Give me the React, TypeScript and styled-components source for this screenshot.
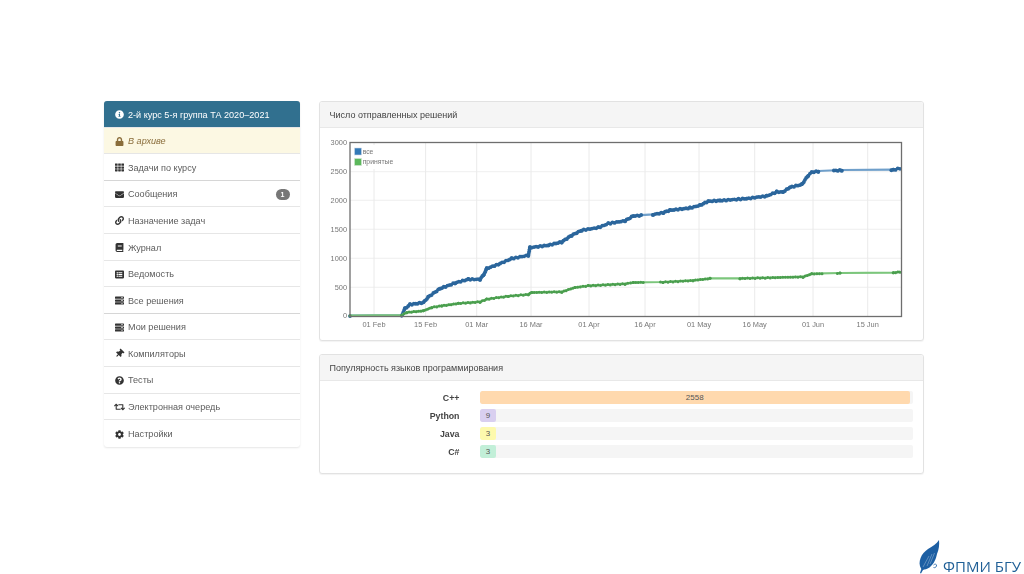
import React from "react";
import styled, { createGlobalStyle } from "styled-components";
import {
  FaInfoCircle, FaLock, FaTh, FaEnvelope, FaLink, FaBook, FaListAlt, FaServer,
  FaThumbtack, FaQuestionCircle, FaRetweet, FaCog,
} from "react-icons/fa";

const Global = createGlobalStyle`
  html, body { margin: 0; padding: 0; background: #fff; }
  body { font-family: "Liberation Sans", Arial, sans-serif; font-size: 9.1px; color: #333; overflow: hidden; }
`;

const Page = styled.div`
  width: 1024px; height: 574px; display: flex; flex-direction: column; box-sizing: border-box; padding-top: 101px;
  filter: blur(0.3px);
`;
const Main = styled.main`
  display: flex; align-items: flex-start; padding: 0 100px 0 104px; gap: 19px;
`;
const Sidebar = styled.nav`
  width: 196px; flex: none; border-radius: 3px; overflow: hidden; background: #fff;
  box-shadow: inset 0 0 0 0.5px #ddd, 0 1px 2px rgba(0,0,0,.1);
`;
const Row = styled.div<{ $kind?: "head" | "warn"; $heavy?: boolean }>`
  height: 26.6px; box-sizing: border-box; display: flex; align-items: center; gap: 4.5px; padding: 1.5px 10.5px 0;
  background: ${p => (p.$kind === "head" ? "#31708f" : p.$kind === "warn" ? "#fcf8e3" : "#fff")};
  color: ${p => (p.$kind === "head" ? "#fff" : p.$kind === "warn" ? "#8a6d3b" : "#5c5c5c")};
  font-style: ${p => (p.$kind === "warn" ? "italic" : "normal")};
  border-bottom: ${p => (p.$heavy ? "1.5px solid #d6d6d6" : "1px solid #e6e6e6")};
  &:last-child { border-bottom: 0; }
  svg { flex: none; width: 9px; height: 9px; color: ${p => (p.$kind === "head" ? "#fff" : p.$kind === "warn" ? "#8a6d3b" : "#333")}; }
`;
const Pin = styled(FaThumbtack)`
  transform: rotate(45deg);
`;
const Retweet = styled(FaRetweet)`
  && { width: 11px; height: 10px; margin: 0 -1px 0 -1px; }
`;
const Badge = styled.span`
  margin-left: auto; margin-right: 0; width: 14px; height: 11px; border-radius: 6px; background: #777; color: #fff;
  font-size: 7px; font-weight: bold; display: flex; align-items: center; justify-content: center;
`;
const Content = styled.div`
  width: 605px; flex: none; display: flex; flex-direction: column; gap: 13px;
`;
const Panel = styled.section`
  border: 1px solid #e2e2e2; border-radius: 3px; background: #fff; box-shadow: 0 1px 1px rgba(0,0,0,.05); overflow: hidden;
`;
const PanelHead = styled.h3`
  margin: 0; height: 26px; box-sizing: border-box; padding: 1px 10px 0 9.5px; display: flex; align-items: center;
  background: #f5f5f5; border-bottom: 1px solid #e8e8e8; font-size: 9px; font-weight: normal; color: #444;
`;
const ChartSvg = styled.svg`
  display: block; width: 603px; height: 212px;
`;
const Bars = styled.div`
  display: grid; grid-template-columns: 130px 1fr; column-gap: 20px; row-gap: 5px; padding: 10px 10px 15px;
  grid-auto-rows: 13px; align-items: center;
`;
const BarLabel = styled.div`
  text-align: right; font-weight: bold; color: #444; font-size: 8.8px; padding-right: 0.5px;
`;
const Track = styled.div`
  height: 100%; background: #f5f5f5; border-radius: 2px; overflow: hidden;
`;
const Fill = styled.div<{ $color: string }>`
  height: 100%; background: ${p => p.$color}; border-radius: 2px; color: #555; font-size: 8px;
  display: flex; align-items: center; justify-content: center;
`;
const Footer = styled.footer`
  margin-top: auto; display: flex; justify-content: flex-end; align-items: flex-end; gap: 0; padding-right: 3px; height: 35px;
`;
const LogoText = styled.span`
  font-family: "Open Sans", "Noto Sans", sans-serif; font-size: 15px; line-height: 16px; color: #1f5f96; white-space: nowrap;
`;

const items: { icon: React.ReactNode; text: string; kind?: "head" | "warn"; heavy?: boolean; badge?: string }[] = [
  { icon: <FaInfoCircle />, text: "2-й курс 5-я группа ТА 2020–2021", kind: "head" },
  { icon: <FaLock />, text: "В архиве", kind: "warn" },
  { icon: <FaTh />, text: "Задачи по курсу", heavy: true },
  { icon: <FaEnvelope />, text: "Сообщения", badge: "1" },
  { icon: <FaLink />, text: "Назначение задач" },
  { icon: <FaBook />, text: "Журнал" },
  { icon: <FaListAlt />, text: "Ведомость" },
  { icon: <FaServer />, text: "Все решения", heavy: true },
  { icon: <FaServer />, text: "Мои решения" },
  { icon: <Pin />, text: "Компиляторы" },
  { icon: <FaQuestionCircle />, text: "Тесты" },
  { icon: <Retweet />, text: "Электронная очередь" },
  { icon: <FaCog />, text: "Настройки" },
];

type P = [number, number];
const blue: P[] = [[350,315.5],[401.7,315],[405,308.3],[410,304.3],[423.3,302.3],[428.3,296.7],[440,288.3],[455,282.7],[468.3,279],[480,279],[483.3,275],[486.7,268.3],[498.3,264],[511.7,258.3],[528.3,255],[530,247.3],[548.3,245],[561.7,241.7],[571.7,235],[581.7,230],[598.3,227.3],[608.3,223.3],[625,220.5],[633.3,215.7],[653,214.3],[663.3,212.3],[670,210],[690,207.7],[700,205],[708.3,201],[720,200.3],[746.7,198.3],[766.7,195.7],[776.7,191.7],[783,191.7],[790,187],[801.7,184.3],[808.3,175],[811.7,172],[818.3,171],[841.7,170],[893.3,169.7],[900,168]];
const green: P[] = [[350,315.5],[401.7,315],[406.7,312.3],[423.3,310.7],[431.7,307.3],[441.7,305.7],[458.3,303.3],[480,301.7],[486.7,299],[508.3,296],[528.3,294.3],[531.7,292.3],[561.7,291.7],[575,287.3],[588.3,285.7],[625,283.7],[633.3,282.3],[663,282],[693,280.3],[710,278.3],[740,278.3],[803,276.7],[811.7,273.7],[840,273],[893.3,272.7],[900,271.7]];

const sample = (pts: P[], gaps: P[], step: number, jitter: number): P[] => {
  const out: P[] = [];
  for (let i = 1; i < pts.length; i++) {
    const [x0, y0] = pts[i - 1];
    const [x1, y1] = pts[i];
    const len = Math.hypot(x1 - x0, y1 - y0);
    const n = Math.max(1, Math.round(len / step));
    for (let k = 0; k <= n; k++) {
      const t = k / n;
      const x = x0 + (x1 - x0) * t;
      if (gaps.some(g => x > g[0] && x < g[1])) continue;
      out.push([x, y0 + (y1 - y0) * t + Math.sin(x * 1.3) * jitter]);
    }
  }
  return out;
};
const blueDots = sample(blue, [[350, 401], [642, 652], [820, 832], [843, 891]], 2, 0.5);
const greenDots = sample(green, [[350, 401], [645, 660], [712, 738], [822, 835], [842, 891]], 2.5, 0.3);

const xTicks: [number, string][] = [[374,"01 Feb"],[425.6,"15 Feb"],[476.7,"01 Mar"],[531,"16 Mar"],[589,"01 Apr"],[645,"16 Apr"],[699,"01 May"],[754.7,"16 May"],[813,"01 Jun"],[867.7,"15 Jun"]];
const yTicks: [number, string][] = [[316,"0"],[287.3,"500"],[258.3,"1000"],[229.3,"1500"],[200.3,"2000"],[171.7,"2500"],[142.7,"3000"]];
const line = (pts: P[]) => pts.map(p => p.join(",")).join(" ");

const Chart = () => (
  <ChartSvg viewBox="320 128 603 212" fontFamily="'Liberation Sans', Arial, sans-serif">
    {xTicks.map(([x]) => <line key={x} x1={x} x2={x} y1={143} y2={316} stroke="#e4e4e4" strokeWidth={0.8} />)}
    {yTicks.slice(1, 6).map(([y]) => <line key={y} x1={350} x2={902} y1={y} y2={y} stroke="#ebebeb" strokeWidth={0.8} />)}
    {xTicks.map(([x, t]) => <text key={t} x={x} y={326.5} fontSize={7.4} fill="#777" textAnchor="middle">{t}</text>)}
    {yTicks.map(([y, t]) => <text key={t} x={347} y={y + 2.2} fontSize={7.4} fill="#777" textAnchor="end">{t}</text>)}
    <rect x={352} y={145} width={46} height={24} fill="#fff" />
    <rect x={354.5} y={148} width={7} height={7} fill="#337ab7" stroke="#cfd9e6" strokeWidth={0.6} />
    <text x={362.7} y={153.5} fontSize={6.8} fill="#777">все</text>
    <rect x={354.5} y={158.5} width={7} height={7} fill="#5cb85c" stroke="#d4e6d4" strokeWidth={0.6} />
    <text x={362.7} y={164} fontSize={6.8} fill="#777">принятые</text>
    <polyline points={line(blue)} fill="none" stroke="#6f9fca" strokeWidth={2.2} />
    {blueDots.map(([x, y], i) => <circle key={i} cx={x} cy={y + 0.3} r={1.9} fill="#2b669c" />)}
    <polyline points={line(green)} fill="none" stroke="#7cc67c" strokeWidth={2.2} />
    {greenDots.map(([x, y], i) => <circle key={i} cx={x} cy={y + 0.2} r={1.5} fill="#4a9e4e" />)}
    <rect x={350} y={142.5} width={551.5} height={174} fill="none" stroke="#6e6e6e" strokeWidth={1.3} />
  </ChartSvg>
);

const Feather = () => (
  <svg width="25" height="35" viewBox="0 0 25 35" style={{ flex: "none" }}>
    <path d="M21 1 C21.5 6 21 10 19 15 C18 20 16 25 11.5 28.5 C9 30 6.5 30.5 5 31 L3 34.5 L2 34 L3.3 30 C1 26.5 1.2 22.5 2.6 19 C4 15 6.5 12.5 10 10 C14.5 7.5 18.5 5 21 1 Z" fill="#1d5fa3" />
    <path d="M5 28 L11 17 M9 27 L14 15 M12 25 L16.5 14" stroke="#fff" strokeWidth="0.3" fill="none" />
    <path d="M15.5 26 C17 24.5 19 25 18.5 27 C18 28.5 16.5 29 15.5 28.5" stroke="#1d5fa3" strokeWidth="0.8" fill="none" />
  </svg>
);

const langs = [
  { name: "C++", value: "2558", color: "#ffd9ae", width: 429.5 },
  { name: "Python", value: "9", color: "#d9cff0", width: 16 },
  { name: "Java", value: "3", color: "#fdf9ad", width: 16 },
  { name: "C#", value: "3", color: "#c2efd8", width: 16 },
];

export default function App() {
  return (
    <Page>
      <Global />
      <Main>
        <Sidebar>
          {items.map(it => (
            <Row key={it.text} $kind={it.kind} $heavy={it.heavy}>
              {it.icon}
              <span>{it.text}</span>
              {it.badge && <Badge>{it.badge}</Badge>}
            </Row>
          ))}
        </Sidebar>
        <Content>
          <Panel>
            <PanelHead>Число отправленных решений</PanelHead>
            <Chart />
          </Panel>
          <Panel>
            <PanelHead>Популярность языков программирования</PanelHead>
            <Bars>
              {langs.map(l => (
                <React.Fragment key={l.name}>
                  <BarLabel>{l.name}</BarLabel>
                  <Track>
                    <Fill $color={l.color} style={{ width: l.width }}>{l.value}</Fill>
                  </Track>
                </React.Fragment>
              ))}
            </Bars>
          </Panel>
        </Content>
      </Main>
      <Footer>
        <Feather />
        <LogoText>ФПМИ БГУ</LogoText>
      </Footer>
    </Page>
  );
}
